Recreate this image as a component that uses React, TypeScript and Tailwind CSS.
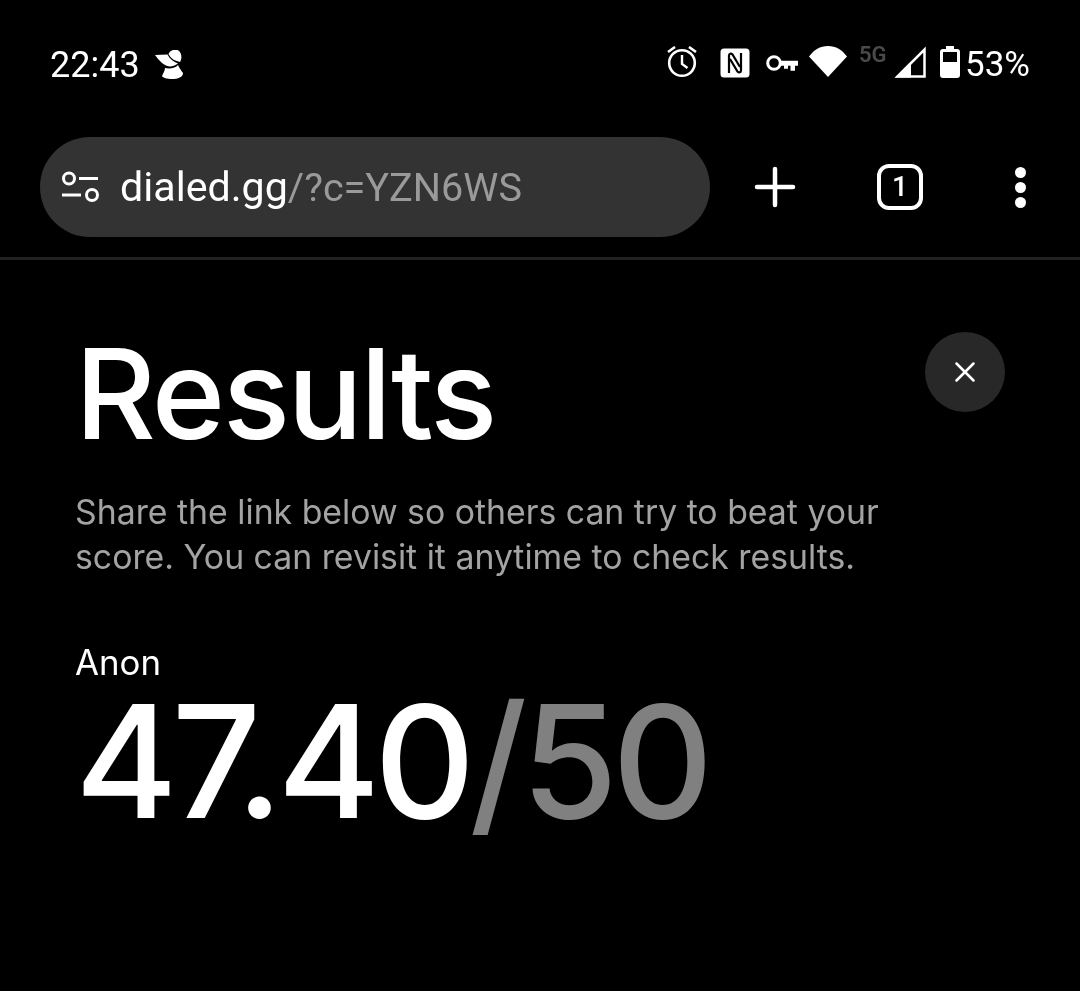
import { X } from "lucide-react";

function StatusIcons() {
  return (
    <div className="flex items-start">
      <svg width="34" height="32" viewBox="0 0 34 32" fill="none" stroke="white">
        <circle cx="17" cy="17" r="12.800" strokeWidth="2.600" />
        <path d="M17 9v9l5.500 4" strokeWidth="2.400" />
        <path d="M3 6 10 1M31 6 24 1" strokeWidth="2.600" />
      </svg>
      <svg width="30" height="30" viewBox="0 0 30 30" className="ml-[21px] mt-[2px]">
        <rect x="0.500" y="0.500" width="29" height="29" rx="3.500" fill="white" />
        <path d="M9 25V7.500c0-2 2-2.500 3.500-1L20 19" fill="none" stroke="black" strokeWidth="2.200" />
        <path d="M21 5v17.500c0 2-2 2.500-3.500 1L10 11" fill="none" stroke="black" strokeWidth="2.200" />
      </svg>
      <svg width="32" height="19" viewBox="0 0 32 19" fill="none" className="ml-[16px] mt-[8px]">
        <circle cx="8" cy="9" r="6.300" stroke="white" strokeWidth="3" />
        <path d="M14 6.800h18v5h-3v5h-4.500v-5H22v3h-4v-3h-4z" fill="white" />
      </svg>
      <svg width="38" height="31" viewBox="0 0 38 31" className="ml-[11px]">
        <path d="M0 10.500C5 4 11 0 19 0s14 4 19 10.500L19 31z" fill="white" />
      </svg>
      <span className="ml-[12px] w-[28px] text-[22px] leading-[18px] font-semibold text-[#4a4a4a] font-['Roboto',sans-serif]">
        5G
      </span>
      <svg width="32" height="32" viewBox="0 0 32 32" className="ml-[7px]">
        <path d="M30.500 3.500V30.500H3.500z" fill="none" stroke="white" strokeWidth="2.500" />
        <path d="M1 31.500 17 15.500V31.500z" fill="white" />
      </svg>
      <svg width="20" height="32" viewBox="0 0 20 32" className="ml-[14px]">
        <path d="M6 0h8v3h3a3 3 0 0 1 3 3v23a3 3 0 0 1-3 3H3a3 3 0 0 1-3-3V6a3 3 0 0 1 3-3h3z" fill="white" />
        <rect x="3" y="6" width="14" height="10" fill="black" />
      </svg>
      <span className="ml-[5px] mt-[1px] text-[35px] leading-[35px] text-white font-['Roboto',sans-serif]">53%</span>
    </div>
  );
}

function StatusBar() {
  return (
    <div className="h-[137px] flex items-start justify-between pl-[50px] pr-[50px] pt-[46px] will-change-transform">
      <div className="flex items-center h-[36px]">
        <span className="pt-[1px] text-[36px] leading-none text-white font-['Roboto',sans-serif]">22:43</span>
        <svg width="28" height="30" viewBox="5 8 28 30" className="ml-[15px] mt-[1px]" fill="white">
          <path d="M18.500 12C20 8 26 6 29 9c3 3 3 8 1 11l-6-2c-3-2-4.500-4-5.500-6z" />
          <path d="M5 13l12.500-.5c2 4 6 7.500 10.500 9-4 3-8 3.500-11 2.500-5-2-9-7-12-11z" />
          <path d="M15 26c5 1 11 0 13-3 1.500 3.500 3.500 6 5 8 0 4-5 6-11 6-5 0-9-1-10-3 1-3 3-5 3-8z" />
        </svg>
      </div>
      <StatusIcons />
    </div>
  );
}

function Toolbar() {
  return (
    <div className="h-[123px] border-b-[3px] border-[#222222] will-change-transform">
      <div className="flex items-center h-[100px]">
        <div className="ml-[40px] w-[670px] h-[100px] rounded-full bg-[#333333] flex items-center pl-[21px]">
          <svg width="38" height="32" viewBox="0 0 38 32" fill="none" stroke="white" strokeWidth="3">
            <circle cx="8" cy="7.500" r="5.500" />
            <path d="M18 7.500h19M1 24h19" />
            <circle cx="31" cy="24" r="5.500" />
          </svg>
          <span className="ml-[21px] pt-[1px] text-[41.200px] leading-none text-white font-['Roboto',sans-serif]">
            dialed.gg<span className="text-[39.600px] text-[#9a9a9a]">/?c=YZN6WS</span>
          </span>
        </div>
        <svg width="42" height="42" viewBox="0 0 42 42" className="ml-[44px]" stroke="white" strokeWidth="4.500" strokeLinecap="round">
          <path d="M21 3v36M3 21h36" />
        </svg>
        <div className="ml-[81px] w-[46px] h-[46px] rounded-[12px] border-[4px] border-white flex items-center justify-center text-[28px] font-medium leading-none text-white font-['Roboto',sans-serif]">
          1
        </div>
        <div className="ml-[92px] flex flex-col gap-[4px]">
          <span className="w-[11px] h-[11px] rounded-full bg-white" />
          <span className="w-[11px] h-[11px] rounded-full bg-white" />
          <span className="w-[11px] h-[11px] rounded-full bg-white" />
        </div>
      </div>
    </div>
  );
}

export default function App() {
  return (
    <div className="w-[1080px] h-[991px] overflow-hidden bg-black font-['Inter',sans-serif]">
      <StatusBar />
      <Toolbar />
      <div className="relative pl-[75px] pt-[69px] will-change-transform">
        <button className="absolute left-[925px] top-[72px] w-[80px] h-[80px] rounded-full bg-[#282828] flex items-center justify-center text-white">
          <X size={34} strokeWidth={1.800} />
        </button>
        <h1 className="text-[125px] leading-[130px] font-medium tracking-[-0.02em] text-white">Results</h1>
        <p className="mt-[30px] w-[860px] text-[33.800px] leading-[45px] text-[#a3a3a3]">
          Share the link below so others can try to beat your score. You can revisit it anytime to check results.
        </p>
        <div className="mt-[58px] text-[34.800px] leading-[50px] text-white">Anon</div>
        <div className="mt-[2px] text-[156.500px] leading-[144px] tracking-[-0.0375em] font-medium text-white">
          47.40<span className="text-[#808080]">/50</span>
        </div>
      </div>
    </div>
  );
}
